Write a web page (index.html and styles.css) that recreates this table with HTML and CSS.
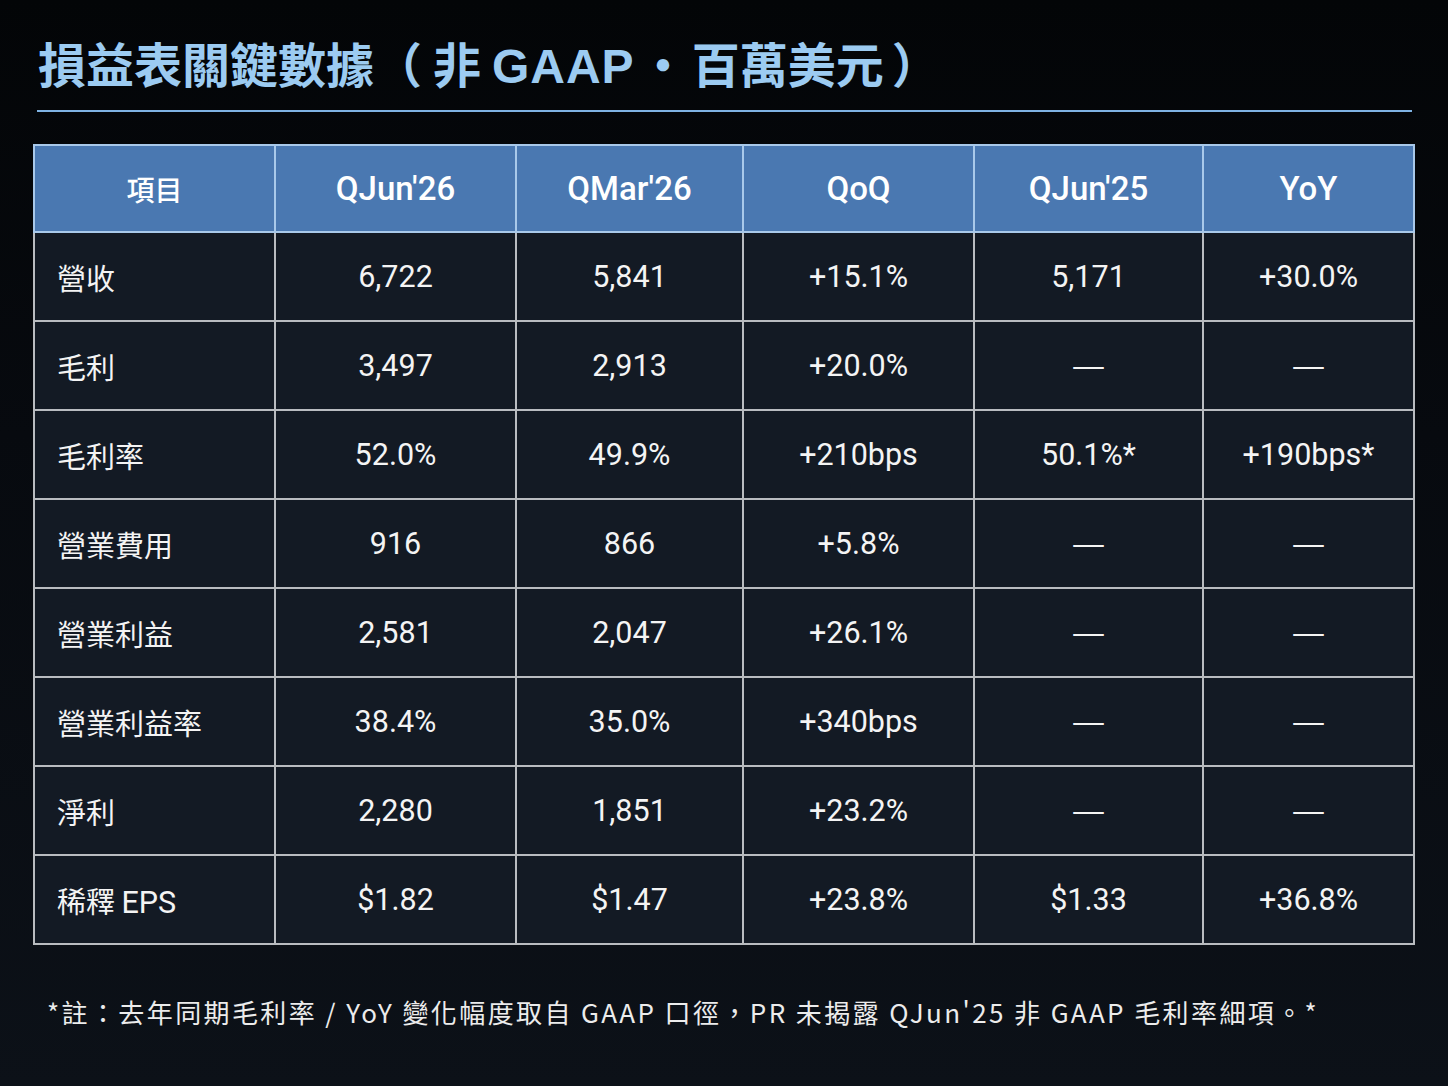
FILE: index.html
```html
<!DOCTYPE html>
<html lang="zh-Hant">
<head>
<meta charset="utf-8">
<title>損益表關鍵數據</title>
<link rel="stylesheet" href="styles.css">
</head>
<body>
<main class="page">
  <h1 class="title"><span class="t-cjk">損益表關鍵數據</span><span class="t-open">（</span><span class="t-cjk">非</span> <span class="t-latin">GAAP</span><span class="t-dot">・</span><span class="t-cjk">百萬美元</span><span class="t-close">）</span></h1>
  <div class="rule"></div>
  <table class="data">
    <colgroup>
      <col class="c1"><col class="c2"><col class="c3"><col class="c4"><col class="c5"><col class="c6">
    </colgroup>
    <thead>
      <tr><th class="th-cjk">項目</th><th>QJun'26</th><th>QMar'26</th><th>QoQ</th><th>QJun'25</th><th>YoY</th></tr>
    </thead>
    <tbody>
      <tr><td class="label">營收</td><td>6,722</td><td>5,841</td><td>+15.1%</td><td>5,171</td><td>+30.0%</td></tr>
      <tr><td class="label">毛利</td><td>3,497</td><td>2,913</td><td>+20.0%</td><td class="dash">—</td><td class="dash">—</td></tr>
      <tr><td class="label">毛利率</td><td>52.0%</td><td>49.9%</td><td>+210bps</td><td>50.1%*</td><td>+190bps*</td></tr>
      <tr><td class="label">營業費用</td><td>916</td><td>866</td><td>+5.8%</td><td class="dash">—</td><td class="dash">—</td></tr>
      <tr><td class="label">營業利益</td><td>2,581</td><td>2,047</td><td>+26.1%</td><td class="dash">—</td><td class="dash">—</td></tr>
      <tr><td class="label">營業利益率</td><td>38.4%</td><td>35.0%</td><td>+340bps</td><td class="dash">—</td><td class="dash">—</td></tr>
      <tr><td class="label">淨利</td><td>2,280</td><td>1,851</td><td>+23.2%</td><td class="dash">—</td><td class="dash">—</td></tr>
      <tr><td class="label">稀釋 <span class="lat">EPS</span></td><td>$1.82</td><td>$1.47</td><td>+23.8%</td><td>$1.33</td><td>+36.8%</td></tr>
    </tbody>
  </table>
  <p class="note">*註：去年同期毛利率 / YoY 變化幅度取自 GAAP 口徑，PR 未揭露 QJun'25 非 GAAP 毛利率細項。*</p>
</main>
</body>
</html>
```
FILE: styles.css
```css
html, body {
  margin: 0;
  padding: 0;
}
body {
  width: 1448px;
  height: 1086px;
  overflow: hidden;
  background: linear-gradient(180deg, #030507 0%, #070a0f 40%, #0c1118 100%);
  font-family: Roboto, "Noto Sans CJK TC", sans-serif;
  color: #f2f2f2;
}
.page {
  padding: 32px 35px 0 33px;
  display: flex;
  flex-direction: column;
}
.title {
  margin: 0 0 0 5px;
  font-family: "Noto Sans CJK TC", sans-serif;
  font-weight: 700;
  font-size: 48px;
  line-height: 60px;
  color: #9ccbf1;
  white-space: nowrap;
}
.t-open {
  display: inline-block;
  width: 59px;
  padding-right: 11px;
  box-sizing: border-box;
  text-align: right;
}
.t-latin {
  font-family: "Liberation Sans", Arial, sans-serif;
  font-weight: 700;
  letter-spacing: 1px;
}
.t-dot {
  display: inline-block;
  width: 57px;
  text-align: center;
}
.t-close {
  display: inline-block;
  width: 40px;
  margin-left: 8px;
  text-align: left;
}
.rule {
  margin: 13px 1px 0 4px;
  height: 2px;
  background: #7fb3e3;
}
.data {
  margin-top: 32px;
  width: 1380px;
  border-collapse: collapse;
  table-layout: fixed;
  font-size: 30.5px;
}
.c1 { width: 241px; }
.c2 { width: 241px; }
.c3 { width: 227px; }
.c4 { width: 231px; }
.c5 { width: 229px; }
.c6 { width: 211px; }
.data th {
  height: 85px;
  background: #4a78b1;
  color: #ffffff;
  font-size: 33px;
  font-weight: 500;
  border: 2px solid #a9c9ea;
  text-align: center;
  padding: 0;
}
.data th.th-cjk {
  font-family: "Noto Sans CJK TC", sans-serif;
  font-size: 28px;
}
.data td {
  height: 87px;
  background: #131a24;
  border: 2px solid #b9bcc0;
  text-align: center;
  padding: 0;
  font-weight: 400;
  color: #f4f4f4;
}
.data td.label {
  text-align: left;
  padding-left: 22px;
  font-family: "Noto Sans CJK TC", sans-serif;
  font-size: 29px;
}
.data td.label .lat {
  font-family: Roboto, sans-serif;
  font-size: 30.5px;
}
.data td.dash {
  font-family: "Liberation Sans", Arial, sans-serif;
}
.note {
  margin: 48px 0 0 14px;
  font-family: "Noto Sans CJK TC", sans-serif;
  font-size: 26px;
  letter-spacing: 2.4px;
  color: #ececec;
  white-space: nowrap;
}
```
